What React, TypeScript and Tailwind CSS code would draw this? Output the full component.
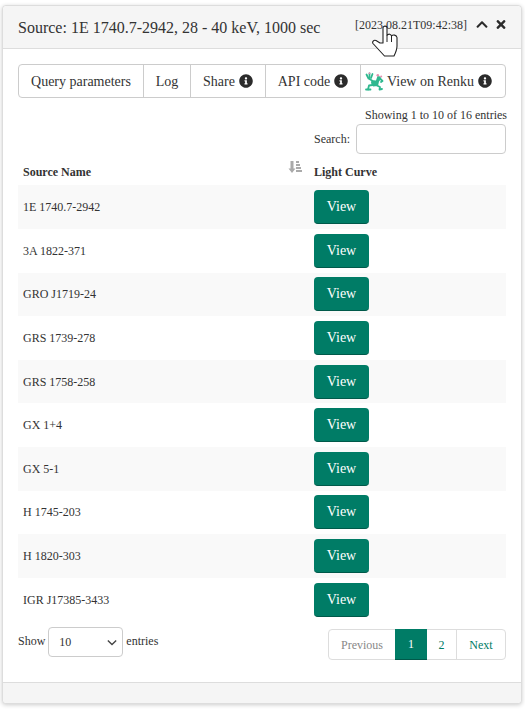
import React from "react";

const rows = ["1E 1740.7-2942","3A 1822-371","GRO J1719-24","GRS 1739-278","GRS 1758-258","GX 1+4","GX 5-1","H 1745-203","H 1820-303","IGR J17385-3433"];

function Info() {
  return (
    <svg viewBox="0 0 512 512" className="inline-block w-[14px] h-[14px] align-[-2px] ml-[4px] shrink-0" fill="#2b2b2b">
      <path d="M256 8C119 8 8 119 8 256s111 248 248 248 248-111 248-248S393 8 256 8zm0 110c23 0 42 19 42 42s-19 42-42 42-42-19-42-42 19-42 42-42zm56 254c0 7-5 12-12 12h-88c-7 0-12-5-12-12v-24c0-7 5-12 12-12h12v-64h-12c-7 0-12-5-12-12v-24c0-7 5-12 12-12h64c7 0 12 5 12 12v100h12c7 0 12 5 12 12v24z" />
    </svg>
  );
}

function Frog() {
  return (
    <svg viewBox="0 0 19 19" className="w-[19px] h-[19px] mr-[3px] shrink-0">
      <g stroke="#2fb88f" strokeWidth="1.8" fill="none" strokeLinecap="round" strokeLinejoin="round">
        <path d="M1.500 2.500L3.500 6.500 7 8.500" />
        <path d="M4.500 1.500L4.500 6" />
        <path d="M7.500 2L6 6" />
        <path d="M7.500 13L4 13.500 3 17.500" />
        <path d="M3 17.500L1 17.500M3 17.500L5.500 17.500" />
        <path d="M12 13.500L15 15 14.500 17.500M14.500 17.500L17 17" />
        <path d="M15 6.500L17.500 9 16 10" />
      </g>
      <path d="M6.500 8L11 8.500 12.500 4 15.500 4.500 16 7 14 9.500 13 14 8 14.500 6 11z" fill="#2fb88f" />
      <circle cx="12.800" cy="3.200" r="1.300" fill="#e58fb0" />
      <circle cx="16.200" cy="4.600" r="1" fill="#e58fb0" />
      <circle cx="4.500" cy="1.200" r="0.900" fill="#e58fb0" />
    </svg>
  );
}

function Hand() {
  return (
    <svg viewBox="0 0 26 32" className="absolute left-[372px] top-[25px] w-[26px] h-[32px]">
      <path d="M11 18V3C11 .5 15 .5 15 3V10.500C16.500 8.500 19 8.800 19.500 11C21 9.300 24.500 9.800 25 12.500V21C25 25 23.500 28 22 31H12.500L1 18.500C0 17 1.500 14.500 4 15.500L8 18z" fill="#fff" stroke="#222" strokeWidth="1.100" strokeLinejoin="round" />
      <path d="M15 10.500V17M19.500 11V17" stroke="#222" strokeWidth="1" fill="none" />
    </svg>
  );
}

export default function App() {
  return (
    <div className="relative w-[525px] h-[709px] bg-white overflow-hidden text-[#333] font-['Liberation_Serif',serif] text-[12px]">
      <div className="absolute left-[2px] top-[5px] w-[520px] h-[699px] bg-white border border-[#ddd] rounded-[4px] shadow-[0_1px_4px_rgba(0,0,0,0.2)] flex flex-col">
        <div className="h-[43px] bg-[#f5f5f5] border-b border-[#ddd] rounded-t-[4px] flex items-center pl-[15px] pr-[15px] shrink-0">
          <span className="text-[16px] leading-none text-[#333] mt-[1px]">Source: 1E 1740.7-2942, 28 - 40 keV, 1000 sec</span>
          <span className="ml-auto text-[12px] leading-none mb-[4px]">[2023.08.21T09:42:38]</span>
          <svg viewBox="0 0 448 512" className="w-[12px] h-[13px] ml-[9px] mb-[5px]" fill="#2b2b2b"><path d="M240.971 130.524l194.343 194.343c9.373 9.373 9.373 24.569 0 33.941l-22.667 22.667c-9.357 9.357-24.522 9.375-33.901.04L224 227.495 69.255 381.516c-9.379 9.335-24.544 9.317-33.901-.04l-22.667-22.667c-9.373-9.373-9.373-24.569 0-33.941L207.03 130.525c9.372-9.373 24.568-9.373 33.941-.001z" /></svg>
          <svg viewBox="0 0 352 512" className="w-[10px] h-[13px] ml-[8px] mb-[5px]" fill="#2b2b2b"><path d="M242.72 256l100.07-100.07c12.28-12.28 12.28-32.19 0-44.48l-22.24-22.24c-12.28-12.28-32.19-12.28-44.48 0L176 189.28 75.93 89.21c-12.28-12.28-32.19-12.28-44.48 0L9.21 111.45c-12.28 12.28-12.28 32.19 0 44.48L109.28 256 9.21 356.07c-12.28 12.28-12.28 32.19 0 44.48l22.24 22.24c12.28 12.28 32.2 12.28 44.48 0L176 322.72l100.07 100.07c12.28 12.28 32.2 12.28 44.48 0l22.24-22.24c12.28-12.28 12.28-32.19 0-44.48L242.72 256z" /></svg>
        </div>
        <div className="flex-1 px-[15px] pt-[15px] flex flex-col">
          <div className="flex h-[34px] border border-[#ccc] rounded-[4px] text-[14px] items-stretch">
            <div className="w-[125px] flex items-center justify-center border-r border-[#ccc]">Query parameters</div>
            <div className="w-[47px] flex items-center justify-center border-r border-[#ccc]">Log</div>
            <div className="w-[75px] flex items-center justify-center border-r border-[#ccc]">Share<Info /></div>
            <div className="w-[95px] flex items-center justify-center border-r border-[#ccc]">API code<Info /></div>
            <div className="flex-1 flex items-center pl-[4px]">
              <Frog />View on Renku<Info />
            </div>
          </div>
          <div className="text-right mt-[10px] leading-[14px] -mr-[1px]">Showing 1 to 10 of 16 entries</div>
          <div className="flex justify-end items-center mt-[2px] h-[30px]">
            <span>Search:</span>
            <div className="w-[150px] h-[30px] border border-[#ccc] rounded-[4px] ml-[6px]" />
          </div>
          <div className="flex h-[31.4px] font-bold items-center">
            <div className="w-[296px] pl-[5px] relative h-full flex items-center mt-[4px]">
              Source Name
              <svg viewBox="0 0 14 12" className="absolute left-[270px] top-[5px] w-[14px] h-[12px]" fill="#aaa">
                <path d="M2.500 0h3v7.500h2L4 12 .5 7.500h2zM8 0h3v2H8zM8 3h4v2H8zM8 6h5v2H8zM8 9h6v2H8z" />
              </svg>
            </div>
            <div className="mt-[4px]">Light Curve</div>
          </div>
          <div className="flex flex-col">
            {rows.map((r, i) => (
              <div key={r} className={`flex h-[43.6px] items-center ${i % 2 === 0 ? "bg-[#f9f9f9]" : "bg-white"}`}>
                <div className="w-[296px] pl-[5px]">{r}</div>
                <div className="w-[55px] h-[34px] bg-[#007c66] border-b border-[#00594a] rounded-[4px] text-white text-[14px] flex items-center justify-center">View</div>
              </div>
            ))}
          </div>
          <div className="flex justify-between mt-[5.6px]">
            <div className="flex items-center h-[30px]">
              <span className="mb-[2px]">Show</span>
              <div className="relative w-[75px] h-[30px] border border-[#ccc] rounded-[4px] ml-[3px] mr-[3px] flex items-center pl-[10px]">
                10
                <svg viewBox="0 0 12 8" className="absolute right-[5px] top-[11px] w-[10px] h-[7px]" fill="none" stroke="#444" strokeWidth="1.6"><path d="M1 1.500l5 5 5-5" /></svg>
              </div>
              <span className="mb-[2px]">entries</span>
            </div>
            <div className="flex h-[31px] mt-[2px] border border-[#ddd] rounded-[4px] items-stretch">
              <div className="w-[66px] pt-[1px] flex items-center justify-center text-[#888]">Previous</div>
              <div className="w-[32px] pt-[1px] -my-[1px] bg-[#007c66] border-b border-[#00594a] text-white flex items-center justify-center">1</div>
              <div className="w-[30px] pt-[1px] border-r border-[#ddd] text-[#007c66] flex items-center justify-center">2</div>
              <div className="w-[48px] pt-[1px] text-[#007c66] flex items-center justify-center">Next</div>
            </div>
          </div>
        </div>
        <div className="h-[21px] bg-[#f5f5f5] border-t border-[#ddd] rounded-b-[4px] shrink-0" />
      </div>
      <Hand />
    </div>
  );
}
